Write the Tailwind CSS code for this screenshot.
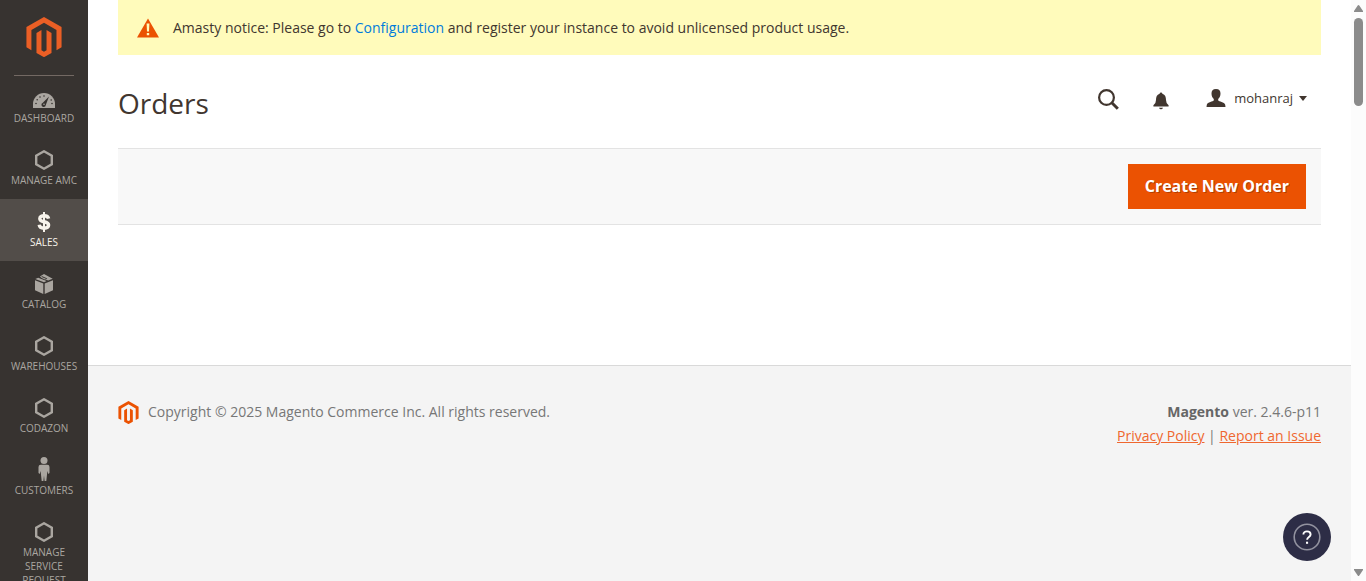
<!DOCTYPE html>
<html lang="en">
<head>
<meta charset="utf-8">
<meta name="viewport" content="width=device-width, initial-scale=1">
<title>Orders / Magento Admin</title>
<script src="https://cdn.jsdelivr.net/npm/@tailwindcss/browser@4"></script>
</head>
<body class="flex h-screen overflow-hidden bg-white font-['Open_Sans',sans-serif] text-sm text-[#41362f]">
<svg class="hidden" aria-hidden="true">
  <symbol id="hex" viewBox="0 0 18 20"><path d="M9 1.300 16.800 5.700V14.300L9 18.700 1.200 14.300V5.700Z" fill="none" stroke="currentColor" stroke-width="2.400"/></symbol>
  <symbol id="magento" viewBox="0 0 36 41"><path fill="currentColor" d="M18 0 36 10.300V31L30.800 34V13.400L18 6 5.100 13.400V34L0 31V10.300ZM15.400 13.300V34.200L18 35.700 20.600 34.200V13.300L25.700 16.300V36.800L18 41.200 10.300 36.800V16.300Z"/></symbol>
</svg>

<aside class="h-full w-22 shrink-0 overflow-hidden bg-[#373330]">
  <a href="#" aria-label="Magento" class="mx-[14px] flex h-[76px] justify-center border-b border-[#736963] pt-[17px] text-[#eb5f25]">
    <svg class="h-10 w-9"><use href="#magento"/></svg>
  </a>
  <nav class="-mt-px text-center text-[10px] leading-[14px] text-[#aaa6a0] uppercase">
    <a href="#" class="block px-2 pt-[10px] pb-3">
      <span class="flex h-[26px] items-center justify-center">
        <svg class="h-[26px] w-6" viewBox="0 0 24 26"><path fill="currentColor" d="M1 23V19a11 11 0 0 1 22 0v4Z"/><g fill="#373330"><circle cx="4" cy="18.500" r=".8"/><circle cx="5.200" cy="14.800" r=".8"/><circle cx="8" cy="12" r=".8"/><circle cx="12" cy="11" r=".8"/><circle cx="19.200" cy="15" r=".8"/><circle cx="20" cy="18.500" r=".8"/><path d="M17 11.500 13.800 20a2.200 2.200 0 1 1-3-2.200Z"/></g><circle cx="12" cy="19.300" r=".8" fill="currentColor"/></svg>
      </span>Dashboard</a>
    <a href="#" class="block px-2 pt-[10px] pb-3"><span class="flex h-[26px] items-center justify-center"><svg class="h-5 w-[18px]"><use href="#hex"/></svg></span>Manage AMC</a>
    <a href="#" class="block bg-[#524d49] px-2 pt-[10px] pb-3 text-[#f7f3eb]">
      <span class="flex h-[26px] items-center justify-center">
        <svg class="h-5 w-3.5" viewBox="0 0 14 20"><path fill="none" stroke="currentColor" stroke-width="3.400" d="M11.600 6.600C11.200 4.600 9.500 3.700 7.200 3.700 4.500 3.700 2.800 4.900 2.800 6.700 2.800 11 11.600 8.500 11.600 13.100 11.600 15.100 9.900 16.200 7.200 16.200 4.400 16.200 2.500 15.200 2.200 12.800"/><path fill="currentColor" d="M6 0h2v20H6z"/></svg>
      </span>Sales</a>
    <a href="#" class="block px-2 pt-[10px] pb-3">
      <span class="flex h-[26px] items-center justify-center">
        <svg class="h-5 w-5" viewBox="0 0 20 20" fill="currentColor"><path d="M1 6.300 9.300 9.500V20L1 16.300ZM19 6.300 10.700 9.500V20L19 16.300ZM1.300 5 4.200 3.700 12.600 7.100 10 8.300ZM10 0 18.700 4.800 14.200 6.500 11.600 5.400 13.400 4.500 8.300 2.300 6.900 3.100 5.800 2.600ZM6.500 3.400 7.800 2.900 12.400 4.900 11 5.500Z"/></svg>
      </span>Catalog</a>
    <a href="#" class="block px-2 pt-[10px] pb-3"><span class="flex h-[26px] items-center justify-center"><svg class="h-5 w-[18px]"><use href="#hex"/></svg></span>Warehouses</a>
    <a href="#" class="block px-2 pt-[10px] pb-3"><span class="flex h-[26px] items-center justify-center"><svg class="h-5 w-[18px]"><use href="#hex"/></svg></span>Codazon</a>
    <a href="#" class="block px-2 pt-[10px] pb-3">
      <span class="flex h-[26px] items-start justify-center">
        <svg class="h-6 w-3" viewBox="0 0 12 24" fill="currentColor"><circle cx="6" cy="3.500" r="3.500"/><path d="M2.800 7.800h6.400q2.300 0 2.300 2.300V16l-1.200 1-.9-3L8.300 24H6.600L6 18.500 5.400 24H3.700L2.600 14l-.9 3L.5 16v-5.900Q.5 7.800 2.800 7.800Z"/></svg>
      </span>Customers</a>
    <a href="#" class="block px-2 pt-[10px] pb-3"><span class="flex h-[26px] items-center justify-center"><svg class="h-5 w-[18px]"><use href="#hex"/></svg></span>Manage Service Request</a>
  </nav>
</aside>

<div class="flex min-w-0 flex-1 flex-col">
  <main class="px-[30px] pb-[140px]">
    <div class="flex h-[55px] items-center bg-[#fffbbb] pl-[19px]">
      <svg class="mr-3.5 h-5 w-[22px] shrink-0" viewBox="0 0 22 20"><path fill="#eb5202" d="M11 .5 22 19.500H0Z"/><path fill="#fffbbb" d="M9.600 5.500h2.800L12 13.500h-2zM9.800 15h2.400v2.200H9.800z"/></svg>
      <p>Amasty notice: Please go to <a href="#" class="text-[#007bdb]">Configuration</a> and register your instance to avoid unlicensed product usage.</p>
    </div>
    <header class="flex h-[93px] items-center justify-between pt-0.5">
      <h1 class="text-[28px] leading-9">Orders</h1>
      <div class="mb-2 flex items-end pr-3.5">
        <button type="button" aria-label="Search" class="mr-[34px]">
          <svg class="block h-[21px] w-[21px]" viewBox="0 0 21 21" fill="none" stroke="currentColor"><circle cx="8.500" cy="8.500" r="7.400" stroke-width="2.200"/><path d="m13.800 13.800 6 6" stroke-width="3"/></svg>
        </button>
        <button type="button" aria-label="Notifications" class="mr-[37px]">
          <svg class="block h-[18px] w-4" viewBox="0 0 16 18" fill="currentColor"><path d="M8 .5q1.200 0 1.400 1.200C12.200 2.500 13 5 13 8q0 3.500 2.600 5.200V14.500H.4V13.200Q3 11.500 3 8C3 5 3.800 2.500 6.600 1.700Q6.800.5 8 .5ZM6 15.700h4q-.6 1.500-2 1.500T6 15.700Z"/></svg>
        </button>
        <button type="button" class="mb-0.5 flex items-center text-[13px] leading-5">
          <svg class="mr-2 h-[18px] w-5" viewBox="0 0 20 18" fill="currentColor"><path d="M10 0c3.200 0 4.600 2 4.500 4.800C14.400 7.300 13.400 9 12.200 10v1.600c.6 1 6.300 1.600 7 4.100L19.500 18H.5l.3-2.300c.7-2.500 6.400-3.100 7-4.100V10C6.600 9 5.600 7.300 5.500 4.800 5.400 2 6.800 0 10 0Z"/></svg>
          mohanraj
          <svg class="mt-0.5 ml-[6px] h-[5px] w-2" viewBox="0 0 8 5" fill="currentColor"><path d="M0 0h8L4 5Z"/></svg>
        </button>
      </div>
    </header>
    <div class="flex justify-end border-y border-[#e3e3e3] bg-[#f8f8f8] px-[15px] py-[15px]">
      <button type="button" class="h-[45px] bg-[#eb5202] px-[17px] pb-0.5 text-base font-bold text-white text-shadow-[1px_1px_0_rgba(0,0,0,0.25)]">Create New Order</button>
    </div>
  </main>
  <footer class="flex flex-1 items-start justify-between border-t border-[#d9d9d9] bg-[#f4f4f4] px-[30px] pt-[34px] leading-6 text-[#777]">
    <p class="flex items-center"><svg class="mr-[9px] h-[23px] w-[21px] text-[#eb5202]"><use href="#magento"/></svg>Copyright © 2025 Magento Commerce Inc. All rights reserved.</p>
    <div class="text-right">
      <p><strong class="font-bold text-[#666]">Magento</strong> ver. 2.4.6-p11</p>
      <p><a href="#" class="text-[#ef672f] underline">Privacy Policy</a> | <a href="#" class="text-[#ef672f] underline">Report an Issue</a></p>
    </div>
  </footer>
</div>

<div class="flex w-[15px] shrink-0 flex-col items-center bg-[#fcfcfc] py-[5px] text-[#8b8b8b]" aria-hidden="true">
  <svg class="h-[7px] w-[9px]" viewBox="0 0 9 7"><path fill="currentColor" d="M4.500 0Q5 0 5.300.5L9 6v1H0V6L3.700.5Q4 0 4.500 0Z"/></svg>
  <div class="mt-1.5 h-[88px] w-[9px] rounded-full bg-current"></div>
  <svg class="mt-auto h-[7px] w-[9px]" viewBox="0 0 9 7"><path fill="currentColor" d="M0 0h9v1L5.300 6.500Q4.500 7.500 3.700 6.500L0 1Z"/></svg>
</div>

<button type="button" aria-label="Help" class="fixed right-[35px] bottom-5 flex size-12 items-center justify-center rounded-full bg-[#2d2d46] text-white">
  <svg class="size-7" viewBox="0 0 28 28" fill="none"><circle cx="14" cy="14" r="12.800" stroke="#92929f" stroke-width="1.600"/><path stroke="currentColor" stroke-width="1.900" d="M10.400 11.600C10.400 9.400 12 8.400 14 8.400s3.600 1.100 3.600 3c0 2.500-3.500 2.600-3.500 5.400"/><path fill="currentColor" d="M13 18.700h2.100v2.100H13z"/></svg>
</button>
</body>
</html>
